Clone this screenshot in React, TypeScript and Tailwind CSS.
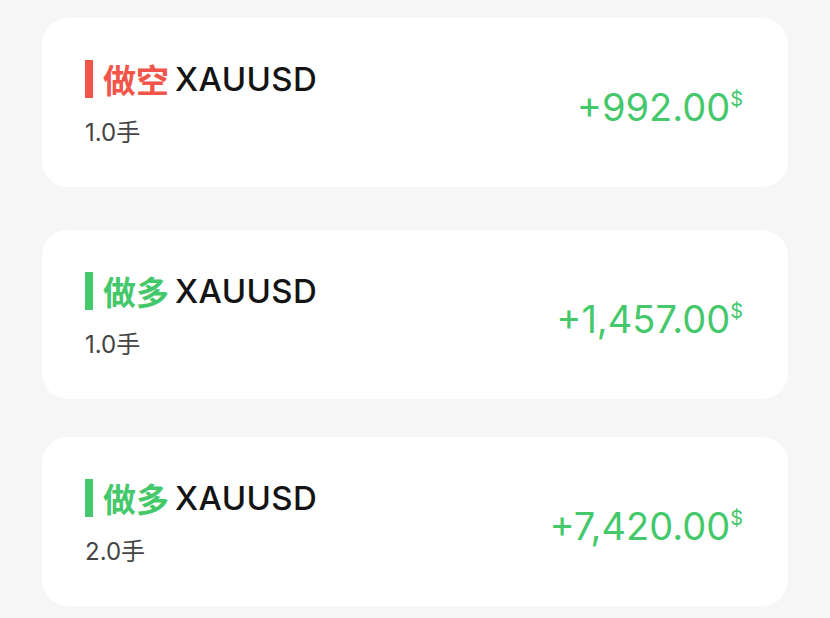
const positions = [
  { side: "做空", lots: "1.0手", pnl: "+992.00", short: true, mt: "mt-[18px]" },
  { side: "做多", lots: "1.0手", pnl: "+1,457.00", short: false, mt: "mt-[43px]" },
  { side: "做多", lots: "2.0手", pnl: "+7,420.00", short: false, mt: "mt-[38px]" },
];

function PositionCard({ side, lots, pnl, short, mt }: (typeof positions)[number]) {
  return (
    <div className={`${mt} h-[169px] rounded-[26px] bg-white pl-[43px] pr-[45px] flex items-center justify-between`}>
      <div className="flex flex-col">
        <div className="flex items-center h-[38px]">
          <span className={`w-[8px] h-[38px] ${short ? "bg-[#f2564b]" : "bg-[#45c86c]"}`} />
          <span
            className={`ml-[10px] text-[33px] font-bold leading-none ${short ? "text-[#f2564b]" : "text-[#45c86c]"}`}
            style={{ fontFamily: '"Noto Sans CJK SC", sans-serif' }}
          >
            {side}
          </span>
          <span className="ml-[6px] text-[33px] font-medium leading-none text-[#141414] tracking-[0.4px]">XAUUSD</span>
        </div>
        <div className="mt-[23px] text-[24px] leading-none text-[#444444]">{lots}</div>
      </div>
      <div className="flex items-start text-[#45c86c] mt-[8px]">
        <span className="text-[38px] leading-none">{pnl}</span>
        <span className="text-[20px] leading-none mt-[1px]">$</span>
      </div>
    </div>
  );
}

export default function App() {
  return (
    <div
      className="w-[830px] h-[618px] bg-[#f6f6f6] px-[42px] overflow-hidden"
      style={{ fontFamily: 'Inter, "Noto Sans CJK SC", sans-serif' }}
    >
      {positions.map((p, i) => (
        <PositionCard key={i} {...p} />
      ))}
    </div>
  );
}
